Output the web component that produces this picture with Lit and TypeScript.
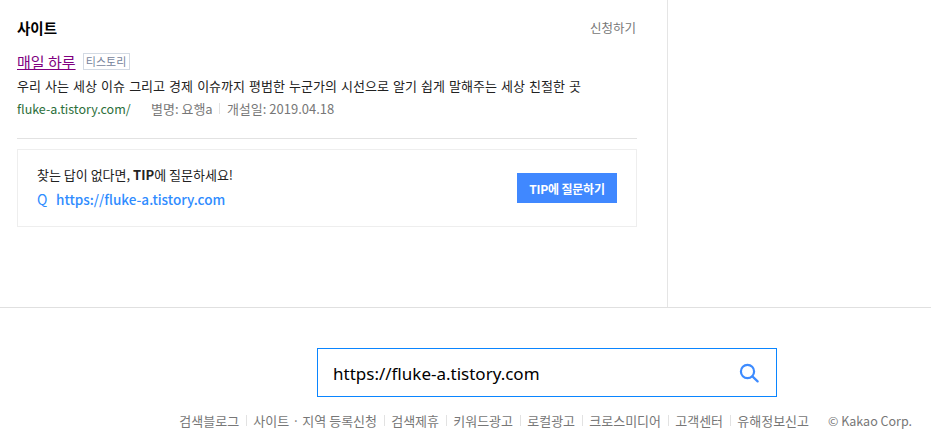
import { LitElement, css, html } from "lit";
import { customElement } from "lit/decorators.js";

const footerLinks = [
  "검색블로그",
  "사이트 · 지역 등록신청",
  "검색제휴",
  "키워드광고",
  "로컬광고",
  "크로스미디어",
  "고객센터",
  "유해정보신고",
];

@customElement("app-root")
export class AppRoot extends LitElement {
  protected render() {
    return html`
      <div class="top">
        <main class="content">
          <div class="head">
            <h2 class="title">사이트</h2>
            <a class="apply">신청하기</a>
          </div>
          <div class="site-name">
            <a class="name">매일 하루</a>
            <span class="tag">티스토리</span>
          </div>
          <p class="desc">우리 사는 세상 이슈 그리고 경제 이슈까지 평범한 누군가의 시선으로 알기 쉽게 말해주는 세상 친절한 곳</p>
          <div class="meta">
            <span class="url">fluke-a.tistory.com/</span>
            <span class="info">별명: 요행a</span>
            <span class="sep"></span>
            <span class="info">개설일: 2019.04.18</span>
          </div>
          <div class="tip">
            <div>
              <div class="tip-text">찾는 답이 없다면, <b>TIP</b>에 질문하세요!</div>
              <div class="tip-query"><span class="q">Q</span>https://fluke-a.tistory.com</div>
            </div>
            <button class="ask">TIP에 질문하기</button>
          </div>
        </main>
        <aside class="side"></aside>
      </div>
      <footer class="bottom">
        <div class="search">
          <span class="query">https://fluke-a.tistory.com</span>
          <svg width="20" height="20" viewBox="0 0 20 20" fill="none" stroke="#3d8bff" stroke-width="2.2">
            <circle cx="8.5" cy="8.5" r="6.6"></circle>
            <path d="M13.4 13.4 L18.6 18.4" stroke-linecap="round"></path>
          </svg>
        </div>
        <nav class="links">
          ${footerLinks.map(
            (link, i) => html`${i > 0 ? html`<span class="sep"></span>` : ""}<a>${link}</a>`
          )}
          <span class="copy">© Kakao Corp.</span>
        </nav>
      </footer>
    `;
  }

  static styles = css`
    :host {
      display: block;
      width: 931px;
      height: 441px;
      overflow: hidden;
      background: #fff;
      font-family: "Noto Sans CJK KR", "Noto Sans", sans-serif;
      font-size: 13px;
      color: #222;
    }

    .top {
      display: flex;
      height: 307px;
      border-bottom: 1px solid #e0e0e0;
    }

    .content {
      width: 620px;
      padding: 0 30px 0 17px;
      border-right: 1px solid #e5e5e5;
    }

    .head {
      display: flex;
      justify-content: space-between;
      align-items: center;
      height: 20px;
      margin-top: 17px;
    }

    .title {
      margin: 0;
      font-size: 14.5px;
      font-weight: 700;
      color: #000;
    }

    .apply {
      margin-right: 1px;
      font-size: 12.5px;
      color: #777;
    }

    .site-name {
      display: flex;
      align-items: center;
      gap: 7px;
      height: 18px;
      margin-top: 15px;
    }

    .name {
      font-size: 15px;
      color: #800080;
      text-decoration: underline;
    }

    .tag {
      display: block;
      box-sizing: border-box;
      width: 47px;
      height: 17px;
      border: 1px solid #d3dae3;
      font-size: 11px;
      line-height: 15px;
      text-align: center;
      color: #76839b;
    }

    .desc {
      margin: 7px 0 0;
      height: 18px;
      font-size: 13px;
      line-height: 18px;
      word-spacing: 1.2px;
      color: #222;
      white-space: nowrap;
    }

    .meta {
      display: flex;
      align-items: center;
      height: 16px;
      margin-top: 5px;
      color: #777;
    }

    .url {
      width: 134px;
      font-size: 12.5px;
      color: #2b6e3a;
    }

    .sep {
      width: 1px;
      height: 11px;
      margin: 0 6.6px;
      background: #e2e2e2;
    }

    .tip {
      display: flex;
      justify-content: space-between;
      align-items: center;
      box-sizing: border-box;
      height: 78px;
      margin-top: 33px;
      padding: 0 19px;
      border: 1px solid #eee;
      position: relative;
    }

    .tip::before {
      content: "";
      position: absolute;
      left: -1px;
      right: -1px;
      top: -12px;
      height: 1px;
      background: #e2e2e2;
    }

    .tip-text {
      height: 20px;
      font-size: 13px;
      line-height: 16px;
      color: #222;
    }

    .tip-text b {
      font-weight: 700;
    }

    .tip-query {
      margin-top: 2px;
      font-size: 13.5px;
      line-height: 20px;
      font-weight: 500;
      color: #2f8cff;
    }

    .q {
      display: inline-block;
      width: 19px;
      font-size: 14px;
      font-weight: 400;
    }

    .ask {
      width: 100px;
      height: 30px;
      padding: 0;
      border: 0;
      background: #4088ff;
      color: #fff;
      font-family: inherit;
      font-size: 12px;
      font-weight: 700;
      letter-spacing: -0.2px;
    }

    .side {
      flex: 1;
    }

    .bottom {
      display: flex;
      flex-direction: column;
      align-items: flex-end;
    }

    .search {
      display: flex;
      justify-content: space-between;
      align-items: center;
      box-sizing: border-box;
      width: 460px;
      height: 49px;
      margin: 40px 154px 0 0;
      padding: 0 17px 0 15px;
      border: 1px solid #0a85ff;
    }

    .query {
      position: relative;
      top: 1px;
      font-family: "Noto Sans", sans-serif;
      font-size: 17px;
      color: #000;
    }

    .links {
      display: flex;
      align-items: center;
      height: 18px;
      margin: 14px 19px 0 0;
      color: #777;
      white-space: nowrap;
    }

    .copy {
      margin-left: 19px;
      font-size: 12.5px;
    }
  `;
}

declare global {
  interface HTMLElementTagNameMap {
    "app-root": AppRoot;
  }
}
